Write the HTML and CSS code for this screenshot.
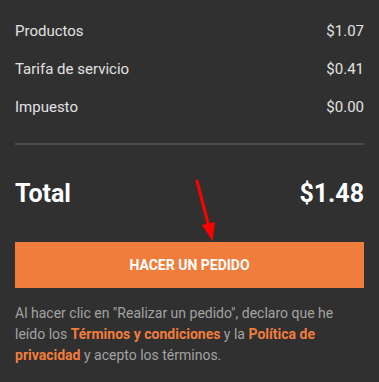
FILE: index.html
```html
<!DOCTYPE html>
<html lang="es">
<head>
<meta charset="utf-8">
<link rel="stylesheet" href="styles.css">
</head>
<body>
<div class="summary">
  <div class="row"><span>Productos</span><span>$1.07</span></div>
  <div class="row"><span>Tarifa de servicio</span><span>$0.41</span></div>
  <div class="row"><span>Impuesto</span><span>$0.00</span></div>
  <div class="divider"></div>
  <div class="total"><span>Total</span><span>$1.48</span></div>
  <button class="order">HACER UN PEDIDO</button>
  <p class="legal">Al hacer clic en "Realizar un pedido", declaro que he leído los <a>Términos y condiciones</a> y la <a>Política de privacidad</a> y acepto los términos.</p>
  <svg class="arrow" width="40" height="70" viewBox="0 0 40 70">
    <line x1="4" y1="2" x2="16" y2="48" stroke="#ff0000" stroke-width="3" stroke-linecap="round"/>
    <polygon points="9,46 22,43 19.5,62" fill="#ff0000"/>
  </svg>
</div>
</body>
</html>
```
FILE: styles.css
```css
html, body {
  margin: 0;
  padding: 0;
  background: #303030;
}
body {
  font-family: Roboto, "Liberation Sans", sans-serif;
}
.summary {
  position: relative;
  padding: 12px 15px 0 15px;
}
.row {
  display: flex;
  justify-content: space-between;
  align-items: center;
  height: 38px;
  font-size: 15px;
  color: #e2e2e2;
}
.divider {
  height: 2px;
  background: #4b4b4b;
  margin-top: 17px;
}
.total {
  display: flex;
  justify-content: space-between;
  align-items: center;
  height: 26px;
  margin-top: 35px;
  font-size: 25px;
  font-weight: 700;
  color: #ffffff;
}
.order {
  display: block;
  width: 100%;
  height: 46px;
  margin-top: 36px;
  border: none;
  background: #f07d3c;
  color: #ffffff;
  font-family: Roboto, "Liberation Sans", sans-serif;
  font-size: 14px;
  font-weight: 700;
  padding: 0;
}
.legal {
  margin: 15px 0 0 0;
  font-size: 14px;
  line-height: 21px;
  color: #a3a3a3;
}
.legal a {
  color: #f07d3c;
  font-weight: 700;
}
.arrow {
  position: absolute;
  left: 193px;
  top: 179px;
}
```
